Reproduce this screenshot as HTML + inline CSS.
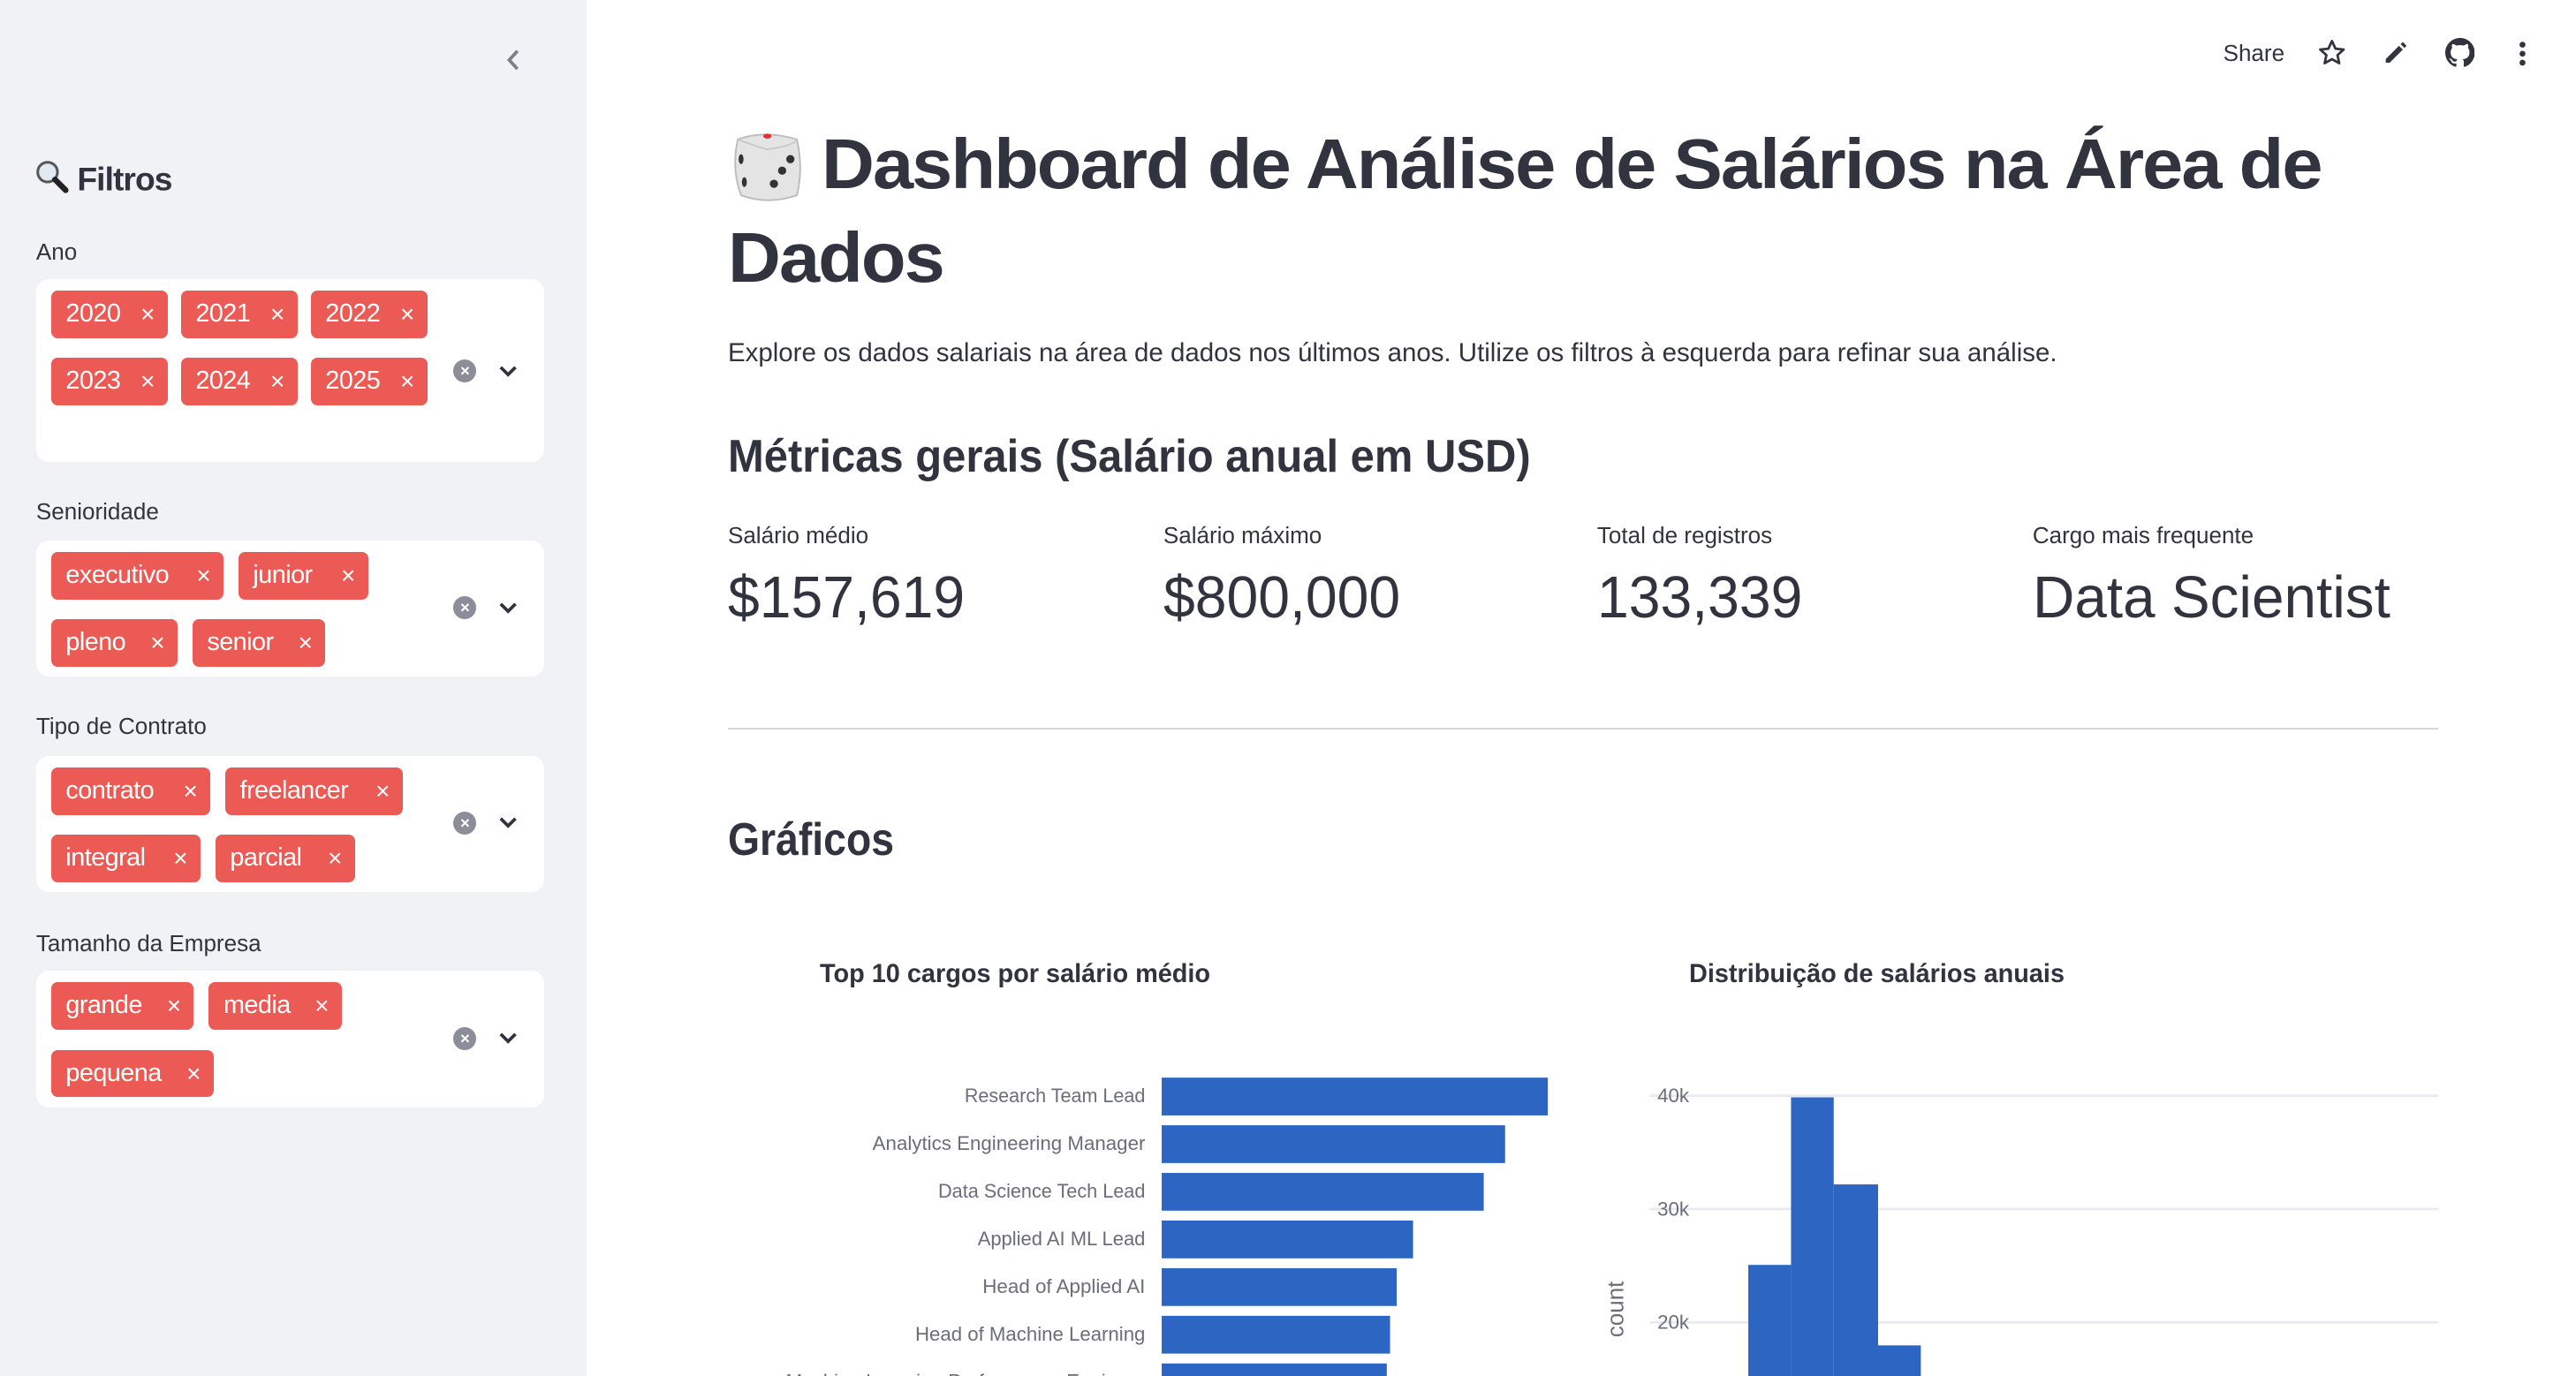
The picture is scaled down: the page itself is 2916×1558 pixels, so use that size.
<!DOCTYPE html>
<html><head><meta charset="utf-8">
<style>
*{margin:0;padding:0;box-sizing:border-box}
html,body{width:2916px;height:1558px;overflow:hidden;background:#fff}
#w{zoom:1.86;width:1568px;height:838px;position:relative;font-family:"Liberation Sans",sans-serif;color:#31333f;overflow:hidden}
.a{position:absolute;white-space:nowrap}
#sb{position:absolute;left:0;top:0;width:357px;height:838px;background:#f0f2f6}
.lbl{font-size:14px;left:22px}
.box{position:absolute;left:22px;width:309px;background:#fff;border-radius:8px}
.tag{position:absolute;height:29px;background:#eb5a54;color:#fff;border-radius:4px;font-size:15.5px;line-height:29px;padding-left:9px;letter-spacing:-0.3px}
.tag i{font-style:normal;position:absolute;right:8px;top:0;font-size:15px}
.clr{position:absolute;left:276px;width:14px;height:14px;border-radius:50%;background:#8b8d98;color:#fff;font-size:10px;line-height:14px;text-align:center;font-weight:bold}
.chev{position:absolute;left:303px;width:12px;height:8px}
.sq{display:inline-block;transform-origin:left center}
</style></head><body><div id="w">
<div id="sb">
<svg class="a" style="left:306px;top:29px" width="12" height="15" viewBox="0 0 12 15"><path d="M9 2 L4 7.5 L9 13" fill="none" stroke="#7d7f8a" stroke-width="2"/></svg>
<div class="a" style="left:21px;top:97px;font-size:20px;font-weight:bold;letter-spacing:-0.5px">
<svg width="22" height="22" viewBox="0 0 22 22" style="vertical-align:-3px;margin-right:4px"><circle cx="8" cy="8" r="6" fill="#dfeaf2" stroke="#555" stroke-width="1.6"/><path d="M12.5 12.5 L19 19" stroke="#222" stroke-width="3.5" stroke-linecap="round"/></svg>Filtros</div>
<div class="a lbl" style="top:145px">Ano</div>
<div class="box" style="top:170px;height:111px"></div>
<div class="tag" style="left:31px;top:177px;width:71px">2020<i>×</i></div>
<div class="tag" style="left:110px;top:177px;width:71px">2021<i>×</i></div>
<div class="tag" style="left:189px;top:177px;width:71px">2022<i>×</i></div>
<div class="tag" style="left:31px;top:218px;width:71px">2023<i>×</i></div>
<div class="tag" style="left:110px;top:218px;width:71px">2024<i>×</i></div>
<div class="tag" style="left:189px;top:218px;width:71px">2025<i>×</i></div>
<div class="clr" style="top:219px">×</div>
<svg class="chev" style="top:222px" viewBox="0 0 12 8"><path d="M1.5 1.5 L6 6 L10.5 1.5" fill="none" stroke="#31333f" stroke-width="2"/></svg>

<div class="a lbl" style="top:303px">Senioridade</div>
<div class="box" style="top:329px;height:83px"></div>
<div class="tag" style="left:31px;top:336px;width:105px">executivo<i>×</i></div>
<div class="tag" style="left:145px;top:336px;width:79px">junior<i>×</i></div>
<div class="tag" style="left:31px;top:377px;width:77px">pleno<i>×</i></div>
<div class="tag" style="left:117px;top:377px;width:81px">senior<i>×</i></div>
<div class="clr" style="top:363px">×</div>
<svg class="chev" style="top:366px" viewBox="0 0 12 8"><path d="M1.5 1.5 L6 6 L10.5 1.5" fill="none" stroke="#31333f" stroke-width="2"/></svg>

<div class="a lbl" style="top:434px">Tipo de Contrato</div>
<div class="box" style="top:460px;height:83px"></div>
<div class="tag" style="left:31px;top:467px;width:97px">contrato<i>×</i></div>
<div class="tag" style="left:137px;top:467px;width:108px">freelancer<i>×</i></div>
<div class="tag" style="left:31px;top:508px;width:91px">integral<i>×</i></div>
<div class="tag" style="left:131px;top:508px;width:85px">parcial<i>×</i></div>
<div class="clr" style="top:494px">×</div>
<svg class="chev" style="top:497px" viewBox="0 0 12 8"><path d="M1.5 1.5 L6 6 L10.5 1.5" fill="none" stroke="#31333f" stroke-width="2"/></svg>

<div class="a lbl" style="top:566px">Tamanho da Empresa</div>
<div class="box" style="top:591px;height:83px"></div>
<div class="tag" style="left:31px;top:598px;width:87px">grande<i>×</i></div>
<div class="tag" style="left:127px;top:598px;width:81px">media<i>×</i></div>
<div class="tag" style="left:31px;top:639px;width:99px">pequena<i>×</i></div>
<div class="clr" style="top:625px">×</div>
<svg class="chev" style="top:628px" viewBox="0 0 12 8"><path d="M1.5 1.5 L6 6 L10.5 1.5" fill="none" stroke="#31333f" stroke-width="2"/></svg>
</div>

<!-- toolbar -->
<div class="a" style="left:1353px;top:24px;font-size:14px">Share</div>
<svg class="a" style="left:1410px;top:23px" width="18" height="18" viewBox="0 0 24 24"><path d="M12 2.5l2.9 6.2 6.6.7-5 4.5 1.4 6.6L12 17.2 6.1 20.5l1.4-6.6-5-4.5 6.6-.7z" fill="none" stroke="#31333f" stroke-width="2" stroke-linejoin="round"/></svg>
<svg class="a" style="left:1450px;top:24px" width="16" height="16" viewBox="0 0 24 24"><path d="M3 21v-3.5L15 5.5l3.5 3.5L6.5 21z M16.5 4l2-2 3.5 3.5-2 2z" fill="#31333f"/></svg>
<svg class="a" style="left:1488px;top:23px" width="18" height="18" viewBox="0 0 16 16"><path fill="#31333f" d="M8 0C3.58 0 0 3.58 0 8c0 3.54 2.29 6.53 5.47 7.59.4.07.55-.17.55-.38 0-.19-.01-.82-.01-1.49-2.01.37-2.53-.49-2.69-.94-.09-.23-.48-.94-.82-1.13-.28-.15-.68-.52-.01-.53.63-.01 1.08.58 1.23.82.72 1.21 1.87.87 2.33.66.07-.52.28-.87.51-1.07-1.78-.2-3.64-.89-3.64-3.95 0-.87.31-1.59.82-2.15-.08-.2-.36-1.02.08-2.12 0 0 .67-.21 2.2.82.64-.18 1.32-.27 2-.27.68 0 1.36.09 2 .27 1.53-1.04 2.2-.82 2.2-.82.44 1.1.16 1.92.08 2.12.51.56.82 1.27.82 2.15 0 3.07-1.87 3.75-3.65 3.95.29.25.54.73.54 1.48 0 1.07-.01 1.93-.01 2.2 0 .21.15.46.55.38A8.013 8.013 0 0016 8c0-4.42-3.58-8-8-8z"/></svg>
<svg class="a" style="left:1531px;top:24px" width="8" height="17" viewBox="0 0 8 17"><circle cx="4" cy="3" r="1.8" fill="#31333f"/><circle cx="4" cy="8.5" r="1.8" fill="#31333f"/><circle cx="4" cy="14" r="1.8" fill="#31333f"/></svg>

<!-- title -->
<svg class="a" style="left:443px;top:77px" width="48" height="48" viewBox="0 0 48 48"><path d="M6 8 Q22 2 42 8 Q46 26 42 42 Q24 48 8 42 Q2 26 6 8Z" fill="#e4e4e4" stroke="#bbb"/><path d="M6 8 Q22 14 24 14 Q40 12 42 8" fill="none" stroke="#c8c8c8"/><ellipse cx="24" cy="6" rx="2.5" ry="1.5" fill="#d33"/><ellipse cx="8" cy="20" rx="1.5" ry="3" fill="#333"/><ellipse cx="10" cy="34" rx="1.5" ry="3" fill="#333"/><circle cx="38" cy="20" r="2.5" fill="#333"/><circle cx="33" cy="27" r="2.5" fill="#333"/><circle cx="28" cy="35" r="2.5" fill="#333"/></svg>
<div class="a" style="left:500px;top:75px;font-size:43px;font-weight:bold;letter-spacing:-1px"><span class="sq" style="transform:scaleX(1.037)">Dashboard de Análise de Salários na Área de</span></div>
<div class="a" style="left:443px;top:132px;font-size:43px;font-weight:bold;letter-spacing:-1px"><span class="sq" style="transform:scaleX(1.037)">Dados</span></div>
<div class="a" style="left:443px;top:206px;font-size:16px"><span class="sq" style="transform:scaleX(0.99)">Explore os dados salariais na área de dados nos últimos anos. Utilize os filtros à esquerda para refinar sua análise.</span></div>
<div class="a" style="left:443px;top:262px;font-size:28px;font-weight:bold"><span class="sq" style="transform:scaleX(0.94)">Métricas gerais (Salário anual em USD)</span></div>

<div class="a" style="left:443px;top:318px;font-size:14px">Salário médio</div>
<div class="a" style="left:708px;top:318px;font-size:14px">Salário máximo</div>
<div class="a" style="left:972px;top:318px;font-size:14px">Total de registros</div>
<div class="a" style="left:1237px;top:318px;font-size:14px">Cargo mais frequente</div>
<div class="a" style="left:443px;top:343px;font-size:36px"><span class="sq" style="transform:scaleX(0.96)">$157,619</span></div>
<div class="a" style="left:708px;top:343px;font-size:36px"><span class="sq" style="transform:scaleX(0.96)">$800,000</span></div>
<div class="a" style="left:972px;top:343px;font-size:36px"><span class="sq" style="transform:scaleX(0.96)">133,339</span></div>
<div class="a" style="left:1237px;top:343px;font-size:36px"><span class="sq" style="transform:scaleX(0.98)">Data Scientist</span></div>
<div class="a" style="left:443px;top:443px;width:1041px;height:1px;background:#d6d6d9"></div>
<div class="a" style="left:443px;top:495px;font-size:28px;font-weight:bold"><span class="sq" style="transform:scaleX(0.89)">Gráficos</span></div>

<div class="a" style="left:499px;top:584px;font-size:16px;font-weight:bold"><span class="sq" style="transform:scaleX(0.97)">Top 10 cargos por salário médio</span></div>
<div class="a" style="left:1028px;top:584px;font-size:16px;font-weight:bold"><span class="sq" style="transform:scaleX(0.97)">Distribuição de salários anuais</span></div>

<svg class="a" style="left:0;top:0" width="1568" height="838">
<g font-family="Liberation Sans" font-size="12" fill="#6b6d7a" text-anchor="end">
<text x="697" y="671" textLength="110" lengthAdjust="spacingAndGlyphs">Research Team Lead</text>
<text x="697" y="700" textLength="166" lengthAdjust="spacingAndGlyphs">Analytics Engineering Manager</text>
<text x="697" y="729" textLength="126" lengthAdjust="spacingAndGlyphs">Data Science Tech Lead</text>
<text x="697" y="758" textLength="102" lengthAdjust="spacingAndGlyphs">Applied AI ML Lead</text>
<text x="697" y="787" textLength="99" lengthAdjust="spacingAndGlyphs">Head of Applied AI</text>
<text x="697" y="816" textLength="140" lengthAdjust="spacingAndGlyphs">Head of Machine Learning</text>
<text x="697" y="845">Machine Learning Performance Engineer</text>
</g>
<g fill="#2c66c2">
<rect x="707" y="656" width="235" height="23"/>
<rect x="707" y="685" width="209" height="23"/>
<rect x="707" y="714" width="196" height="23"/>
<rect x="707" y="743" width="153" height="23"/>
<rect x="707" y="772" width="143" height="23"/>
<rect x="707" y="801" width="139" height="23"/>
<rect x="707" y="830" width="137" height="23"/>
</g>
<g stroke="#e8eaef" stroke-width="1.5"><line x1="1004" y1="667" x2="1484" y2="667"/><line x1="1004" y1="736" x2="1484" y2="736"/><line x1="1004" y1="805" x2="1484" y2="805"/></g>
<g font-family="Liberation Sans" font-size="12" fill="#6b6d7a" text-anchor="end"><text x="1028" y="671">40k</text><text x="1028" y="740">30k</text><text x="1028" y="809">20k</text></g>
<text x="988" y="797" transform="rotate(-90 988 797)" font-family="Liberation Sans" font-size="14" fill="#6b6d7a" text-anchor="middle">count</text>
<g fill="#2c66c2"><rect x="1064" y="770" width="26" height="70"/><rect x="1090" y="668" width="26" height="172"/><rect x="1116" y="721" width="27" height="119"/><rect x="1143" y="819" width="26" height="21"/></g>
</svg>
</div></body></html>
